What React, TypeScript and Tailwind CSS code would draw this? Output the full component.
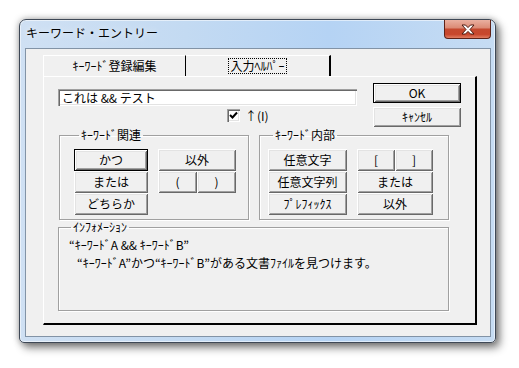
import type { ReactNode } from 'react';
import clsx from 'clsx';

const BEVEL =
  'shadow-[inset_1px_1px_0_#fff,inset_-1px_-1px_0_#696969,inset_2px_2px_0_#e3e3e3,inset_-2px_-2px_0_#a0a0a0]';

function Btn({
  children,
  className,
  primary = false,
}: {
  children: ReactNode;
  className?: string;
  primary?: boolean;
}) {
  return (
    <div
      className={clsx(
        'flex items-center justify-center bg-[#f0f0f0] text-[12px] leading-none text-black',
        BEVEL,
        primary && 'border border-black',
        className
      )}
    >
      {children}
    </div>
  );
}

function Group({
  label,
  className,
  legendClass,
  children,
}: {
  label: string;
  className?: string;
  legendClass?: string;
  children: ReactNode;
}) {
  return (
    <fieldset
      className={clsx(
        'border border-[#a0a0a0] shadow-[1px_1px_0_#fff,inset_1px_1px_0_#fff]',
        className
      )}
    >
      <legend className={clsx('px-[2px] text-[12px] leading-[12px]', legendClass)}>{label}</legend>
      {children}
    </fieldset>
  );
}

function CloseGlyph() {
  return (
    <svg width="14" height="11" viewBox="0 0 14 11">
      <polygon
        points="1,1 4.5,1 7,3.6 9.5,1 13,1 9,5.5 13,10 9.5,10 7,7.4 4.5,10 1,10 5,5.5"
        fill="#fff"
        stroke="#4d1a10"
        strokeWidth="1"
        strokeLinejoin="round"
      />
    </svg>
  );
}

function CheckMark() {
  return (
    <svg width="9" height="9" viewBox="0 0 9 9">
      <polyline points="1,4 3.5,6.5 8,1.5" fill="none" stroke="#000" strokeWidth="2" />
    </svg>
  );
}

export default function App() {
  return (
    <div className="w-[519px] h-[368px] overflow-hidden bg-white pl-[19px] pt-[19px] font-['Noto_Sans_CJK_JP',sans-serif] text-black">
      {/* window frame */}
      <div className="w-[477px] h-[324px] rounded-t-[7px] rounded-b-[5px] border border-[#3e4856] bg-[linear-gradient(90deg,#cfe0f3_0%,#c3daf2_35%,#b5d3f4_65%,#c6dcf3_100%)] px-[5px] pb-[5px] pr-[4px] shadow-[0_0_7px_rgba(0,0,0,0.35),4px_5px_9px_rgba(0,0,0,0.45),inset_0_0_0_1px_rgba(255,255,255,0.55)]">
        {/* title bar */}
        <div className="flex h-[28px] items-start justify-between">
          <div className="pl-[1px] pt-[5px] text-[12px] leading-[16px] [text-shadow:0_0_6px_#fff]">
            キーワード・エントリー
          </div>
          <div className="flex h-[19px] w-[47px] items-center justify-center rounded-b-[4px] border border-t-0 border-[#5e2218] bg-[linear-gradient(180deg,#eab0a0_0%,#dc8c77_42%,#c5492f_52%,#c8472d_80%,#e17d62_100%)]">
            <CloseGlyph />
          </div>
        </div>

        {/* client area */}
        <div className="h-[289px] w-[466px] border border-[#8293a6] bg-[#f0f0f0] pl-[17px] pt-[6px]">
          {/* tabs */}
          <div className="flex h-[21px]">
            <div className="flex w-[143px] items-center justify-center border-l border-t border-r border-l-white border-t-white border-r-black text-[12px] leading-none">
              ｷｰﾜｰﾄﾞ登録編集
            </div>
            <div className="flex w-[145px] items-center justify-center border-t border-r-2 border-t-white border-r-black">
              <span className="flex h-[16px] items-center border border-dotted border-black px-[1px] text-[12px] leading-none">
                入力ﾍﾙﾊﾟｰ
              </span>
            </div>
          </div>

          {/* tab page */}
          <div className="h-[249px] w-[434px] border-l border-t border-b-2 border-r-2 border-l-white border-t-white border-b-black border-r-black pl-[14px] pt-[6px]">
            <div className="flex items-start">
              <div className="mt-[6px] w-[299px]">
                <div className="h-[17px] bg-white pl-[4px] text-[12px] leading-[17px] shadow-[inset_1px_1px_0_#a0a0a0,inset_2px_2px_0_#696969,inset_-1px_-1px_0_#fff,inset_-2px_-2px_0_#e3e3e3]">
                  これは &amp;&amp; テスト
                </div>
                <div className="mt-[3px] flex items-center pl-[169px]">
                  <div className="flex h-[13px] w-[13px] items-center justify-center bg-white shadow-[inset_1px_1px_0_#a0a0a0,inset_2px_2px_0_#696969,inset_-1px_-1px_0_#fff,inset_-2px_-2px_0_#e3e3e3]">
                    <CheckMark />
                  </div>
                  <span className="ml-[5px] text-[12px] leading-[13px]">↑(I)</span>
                </div>
              </div>
              <div className="ml-[16px] flex flex-col gap-[4px]">
                <Btn primary className="h-[20px] w-[88px]">
                  OK
                </Btn>
                <Btn className="h-[20px] w-[88px]">ｷｬﾝｾﾙ</Btn>
              </div>
            </div>

            {/* keyword groups */}
            <div className="ml-[1px] mt-[2px] flex gap-[10px]">
              <Group label="ｷｰﾜｰﾄﾞ関連" className="h-[91px] w-[190px] pl-[14px] pt-[8px]" legendClass="ml-[5px]">
                <div className="flex gap-[10px]">
                  <div className="flex flex-col">
                    <Btn primary className="h-[22px] w-[74px]">
                      かつ
                    </Btn>
                    <Btn className="h-[22px] w-[74px]">または</Btn>
                    <Btn className="h-[22px] w-[74px]">どちらか</Btn>
                  </div>
                  <div className="flex flex-col">
                    <Btn className="h-[22px] w-[78px]">以外</Btn>
                    <div className="flex">
                      <Btn className="h-[22px] w-[39px]">(</Btn>
                      <Btn className="h-[22px] w-[39px]">)</Btn>
                    </div>
                  </div>
                </div>
              </Group>
              <Group label="ｷｰﾜｰﾄﾞ内部" className="h-[91px] w-[190px] pl-[8px] pt-[8px]" legendClass="ml-[5px]">
                <div className="flex gap-[10px]">
                  <div className="flex flex-col">
                    <Btn className="h-[22px] w-[79px]">任意文字</Btn>
                    <Btn className="h-[22px] w-[79px]">任意文字列</Btn>
                    <Btn className="h-[22px] w-[79px]">ﾌﾟﾚﾌｨｯｸｽ</Btn>
                  </div>
                  <div className="flex flex-col">
                    <div className="flex">
                      <Btn className="h-[22px] w-[38px]">[</Btn>
                      <Btn className="h-[22px] w-[38px]">]</Btn>
                    </div>
                    <Btn className="h-[22px] w-[76px]">または</Btn>
                    <Btn className="h-[22px] w-[76px]">以外</Btn>
                  </div>
                </div>
              </Group>
            </div>

            {/* information */}
            <Group label="ｲﾝﾌｫﾒｰｼｮﾝ" className="mt-[1px] h-[90px] w-[391px] pl-[10px] pt-[3px]" legendClass="ml-[2px]">
              <div className="text-[12px] leading-[18px]">
                <div>“ｷｰﾜｰﾄﾞA &amp;&amp; ｷｰﾜｰﾄﾞB”</div>
                <div className="pl-[8px]">“ｷｰﾜｰﾄﾞA”かつ“ｷｰﾜｰﾄﾞB”がある文書ﾌｧｲﾙを見つけます。</div>
              </div>
            </Group>
          </div>
        </div>
      </div>
    </div>
  );
}
